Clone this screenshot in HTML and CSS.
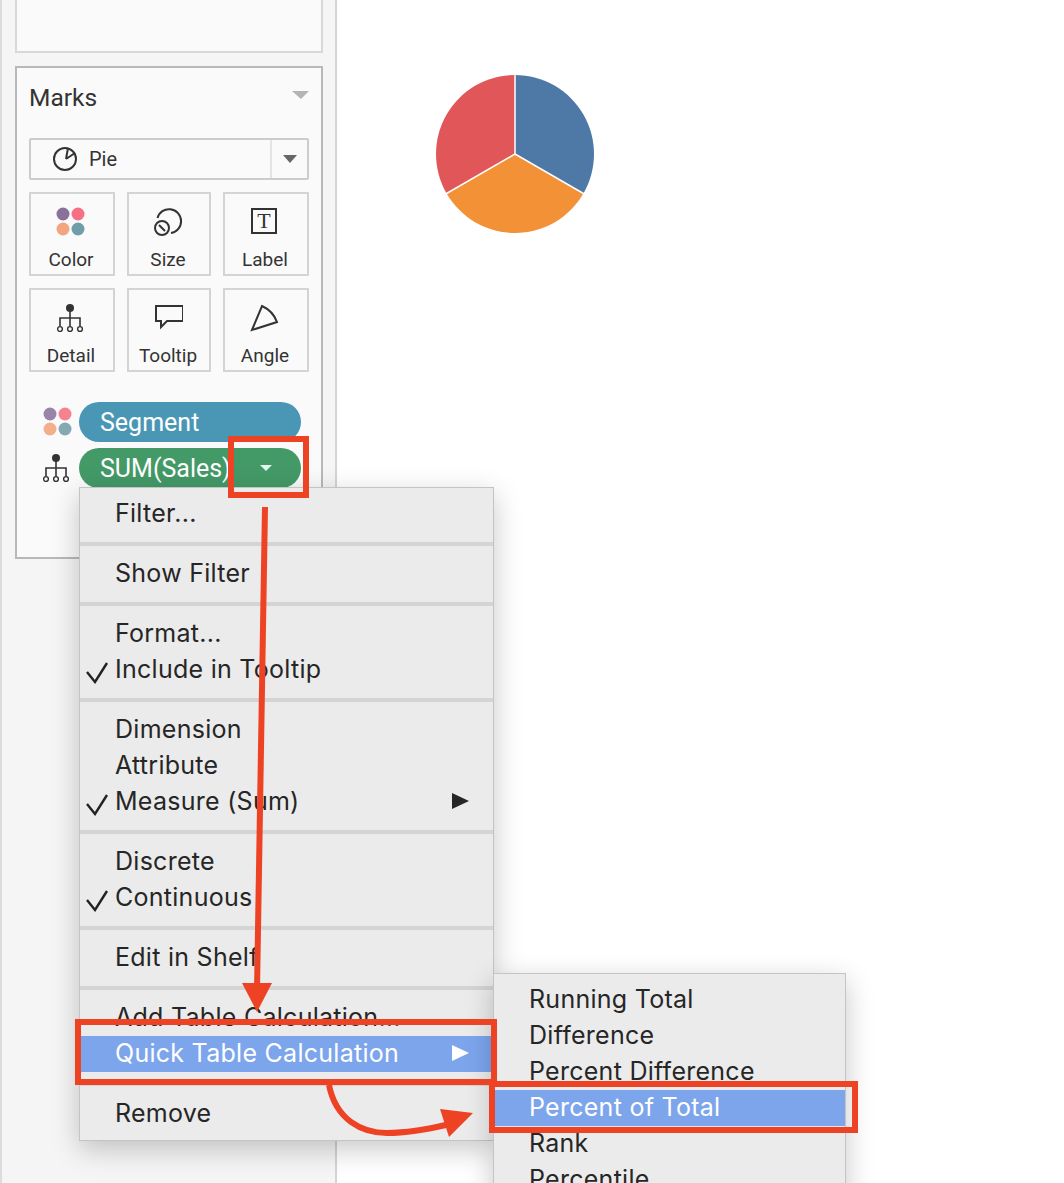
FILE: index.html
```html
<!DOCTYPE html>
<html>
	<head>
		<meta charset="UTF-8">
		<title>Marks</title>
		<link rel="stylesheet" href="styles.css">
	</head>
	<body>
		<div id="page">
			<div id="side">
				<div class="card-top"></div>
				<div id="marks">
					<div class="marks-head">
						<span>Marks</span>
						<i class="tri"></i>
					</div>
					<div class="select">
						<div class="select-val">
							<svg width="26" height="26" viewBox="0 0 26 26"><circle cx="13" cy="13" r="11" fill="none" stroke="#333" stroke-width="2"/><path d="M14 13L16 2M14 13L23 7" fill="none" stroke="#333" stroke-width="2"/></svg>
							<span>Pie</span>
						</div>
						<div class="select-btn"><i></i></div>
					</div>
					<div class="btns">
						<div class="btn">
							<svg width="30" height="30" viewBox="0 0 30 30"><circle cx="7" cy="7" r="6.5" fill="#8a7199"/><circle cx="22" cy="7" r="6.5" fill="#f76f83"/><circle cx="7" cy="22" r="6.5" fill="#f2a67f"/><circle cx="22" cy="22" r="6.5" fill="#6f9ea9"/></svg>
							<span>Color</span>
						</div>
						<div class="btn">
							<svg width="30" height="30" viewBox="0 0 30 30"><path d="M4.5 11A12 12 0 1 1 18 26" fill="none" stroke="#333" stroke-width="2"/><circle cx="9" cy="21" r="7" fill="none" stroke="#333" stroke-width="2"/><path d="M6 18L12 24" stroke="#333" stroke-width="2"/></svg>
							<span>Size</span>
						</div>
						<div class="btn">
							<svg width="30" height="30" viewBox="0 0 30 30"><rect x="2" y="2" width="24" height="24" fill="none" stroke="#333" stroke-width="2"/><text x="14" y="21" text-anchor="middle" class="t-icon">T</text></svg>
							<span>Label</span>
						</div>
						<div class="btn">
							<svg width="30" height="30" viewBox="-1 0 30 30"><use href="#tree"/></svg>
							<span>Detail</span>
						</div>
						<div class="btn">
							<svg width="30" height="30" viewBox="0 0 30 30"><path d="M3 3H30V18H14L8 24V18H3Z" fill="none" stroke="#333" stroke-width="2"/></svg>
							<span>Tooltip</span>
						</div>
						<div class="btn">
							<svg width="30" height="30" viewBox="0 0 30 30"><path d="M2 27L12 3Q23 8 27 19Z" fill="none" stroke="#333" stroke-width="2"/></svg>
							<span>Angle</span>
						</div>
					</div>
					<div class="pills">
						<div class="pill-row">
							<svg width="30" height="30" viewBox="0 0 30 30"><circle cx="7" cy="7" r="6.5" fill="#9b84a9"/><circle cx="22" cy="7" r="6.5" fill="#f5828f"/><circle cx="7" cy="22" r="6.5" fill="#f3ae8c"/><circle cx="22" cy="22" r="6.5" fill="#84a9b3"/></svg>
							<div class="pill blue">Segment</div>
						</div>
						<div class="pill-row">
							<svg width="30" height="30" viewBox="0 0 30 30"><use href="#tree"/></svg>
							<div class="pill green">SUM(Sales)<i></i></div>
						</div>
					</div>
				</div>
			</div>
			<div id="view">
				<svg width="160" height="160" viewBox="-80 -80 160 160">
					<path d="M0 0V-79A79 79 0 0 1 68.4 39.5Z" fill="#4e79a7"/>
					<path d="M0 0L68.4 39.5A79 79 0 0 1 -68.4 39.5Z" fill="#f39137"/>
					<path d="M0 0L-68.4 39.5A79 79 0 0 1 0 -79Z" fill="#e15759"/>
					<path d="M0 -80V0M0 0L69.3 40M0 0L-69.3 40" stroke="#fff" stroke-width="1.5"/>
				</svg>
			</div>
		</div>

		<svg class="defs" width="0" height="0">
			<symbol id="tree" viewBox="0 0 30 30">
				<circle cx="13" cy="5" r="4" fill="#333"/>
				<path d="M13 8V15M3 23V15H23V23M13 15V23" fill="none" stroke="#333" stroke-width="1.6"/>
				<circle cx="3" cy="26" r="2.4" fill="none" stroke="#333" stroke-width="1.4"/>
				<circle cx="13" cy="26" r="2.4" fill="none" stroke="#333" stroke-width="1.4"/>
				<circle cx="23" cy="26" r="2.4" fill="none" stroke="#333" stroke-width="1.4"/>
			</symbol>
			<symbol id="check" viewBox="0 0 24 24">
				<path d="M2 12L10 22L22 3" fill="none" stroke="#222" stroke-width="2.4"/>
			</symbol>
		</svg>

		<ul class="menu" id="menu">
			<li>Filter...</li>
			<li class="sep"></li>
			<li>Show Filter</li>
			<li class="sep"></li>
			<li>Format...</li>
			<li class="on"><svg class="check"><use href="#check"/></svg>Include in Tooltip</li>
			<li class="sep"></li>
			<li>Dimension</li>
			<li>Attribute</li>
			<li class="on"><svg class="check"><use href="#check"/></svg>Measure (Sum)<i class="more"></i></li>
			<li class="sep"></li>
			<li>Discrete</li>
			<li class="on"><svg class="check"><use href="#check"/></svg>Continuous</li>
			<li class="sep"></li>
			<li>Edit in Shelf</li>
			<li class="sep"></li>
			<li>Add Table Calculation...</li>
			<li class="active">Quick Table Calculation<i class="more"></i></li>
			<li class="sep"></li>
			<li>Remove</li>
		</ul>

		<ul class="menu" id="submenu">
			<li>Running Total</li>
			<li>Difference</li>
			<li>Percent Difference</li>
			<li class="active">Percent of Total</li>
			<li>Rank</li>
			<li>Percentile</li>
		</ul>

		<!-- red marks drawn on top of the screenshot -->
		<svg id="notes" width="1064" height="1183" viewBox="0 0 1064 1183">
			<rect x="231" y="439" width="75" height="56" />
			<rect x="78" y="1022" width="416" height="60" />
			<rect x="492" y="1084" width="363" height="46" />
			<path d="M265 507L257 990" />
			<path class="solid" d="M242 983H272L257 1012Z" />
			<path d="M329 1085C336 1120 362 1133 387 1133C405 1133 425 1130 450 1124" />
			<path class="solid" d="M440 1109L473 1113L449 1137Z" />
		</svg>
	</body>
</html>
```

FILE: styles.css
```css
html,body{
	margin: 0;
	height: 1183px;
	overflow: hidden;
	background: #fff;
}
ul{
	margin: 0;
	padding: 0;
}
li{
	list-style: none;
}
i{
	display: block;
}
#page{
	display: flex;
	height: 1183px;
}
#side{
	box-sizing: border-box;
	width: 337px;
	height: 100%;
	padding: 0 12px 0 13px;
	background: #f5f5f5;
	border-left: 2px solid #dcdcdc;
	border-right: 2px solid #d4d4d4;
	font-family: Roboto, sans-serif;
	color: #333;
}
.card-top{
	box-sizing: border-box;
	height: 53px;
	background: #fafafa;
	border: 2px solid #d8d8d8;
	border-top: 0;
}
#marks{
	box-sizing: border-box;
	height: 493px;
	margin-top: 13px;
	padding: 0 12px;
	background: #fafafa;
	border: 2px solid #b8b8b8;
}
.marks-head{
	display: flex;
	align-items: center;
	justify-content: space-between;
	height: 58px;
	font-size: 24.5px;
}
.tri{
	width: 0;
	height: 0;
	margin-bottom: 4px;
	border-left: 9px solid transparent;
	border-right: 8px solid transparent;
	border-top: 8px solid #b4b4b4;
}
.select{
	box-sizing: border-box;
	display: flex;
	height: 42px;
	margin-top: 12px;
	border: 2px solid #ccc;
	border-radius: 2px;
}
.select-val{
	flex: 1;
	display: flex;
	align-items: center;
	gap: 11px;
	padding-left: 21px;
	font-size: 20px;
}
.select-btn{
	display: flex;
	align-items: center;
	justify-content: center;
	width: 35px;
	border-left: 2px solid #e4e4e4;
}
.select-btn i{
	border-left: 7px solid transparent;
	border-right: 7px solid transparent;
	border-top: 8px solid #666;
}
.btns{
	display: grid;
	grid-template-columns: 86px 84px 86px;
	grid-auto-rows: 84px;
	gap: 12px;
	margin-top: 12px;
}
.btn{
	box-sizing: border-box;
	display: flex;
	flex-direction: column;
	align-items: center;
	padding: 13px 2px 0 0;
	border: 2px solid #d4d4d4;
	font-size: 19px;
	line-height: 24px;
}
.btn svg{
	display: block;
	margin-bottom: 11px;
}
.t-icon{
	font-family: "Liberation Serif", serif;
	font-size: 22px;
	fill: #333;
}
.pills{
	display: flex;
	flex-direction: column;
	gap: 6px;
	margin-top: 30px;
}
.pill-row{
	display: flex;
	align-items: center;
	padding-left: 14px;
	gap: 6px;
}
.pill{
	box-sizing: border-box;
	display: flex;
	align-items: center;
	justify-content: space-between;
	width: 222px;
	height: 40px;
	padding: 0 29px 0 21px;
	border-radius: 20px;
	color: #fff;
	font-size: 25px;
}
.blue{
	background: #4a96b5;
}
.green{
	background: #439a67;
}
.green i{
	border-left: 6px solid transparent;
	border-right: 6px solid transparent;
	border-top: 6px solid #e4f7ee;
}
#view{
	flex: 1;
	padding: 74px 0 0 98px;
}
.defs{
	position: absolute;
}
.menu{
	position: absolute;
	box-sizing: border-box;
	background: #ebebeb;
	border: 1px solid #c4c4c4;
	box-shadow: 0 8px 26px rgba(0,0,0,.22);
	font-family: Inter, "Liberation Sans", sans-serif;
	font-size: 25px;
	letter-spacing: .27px;
	color: #262626;
}
#menu{
	left: 79px;
	top: 487px;
	width: 415px;
	height: 654px;
	padding: 8px 0;
}
#submenu{
	left: 493px;
	top: 973px;
	width: 353px;
	height: 230px;
	padding: 8px 0;
}
.menu li{
	position: relative;
	box-sizing: border-box;
	display: flex;
	align-items: center;
	justify-content: space-between;
	height: 36px;
	padding: 0 24px 2px 35px;
	white-space: nowrap;
}
.menu .sep{
	height: 4px;
	padding: 0;
	margin: 10px 0 10px;
	background: #d4d4d4;
}
.menu .active{
	background: #7ca5ec;
	color: #fff;
}
.check{
	position: absolute;
	left: 5px;
	top: 8px;
	width: 24px;
	height: 24px;
}
.more{
	border-top: 8px solid transparent;
	border-bottom: 8px solid transparent;
	border-left: 17px solid #262626;
}
.active .more{
	border-left-color: #fff;
}
#notes{
	position: absolute;
	left: 0;
	top: 0;
	fill: none;
	stroke: #ee4224;
	stroke-width: 6;
}
#notes .solid{
	fill: #ee4224;
	stroke: none;
}
```
